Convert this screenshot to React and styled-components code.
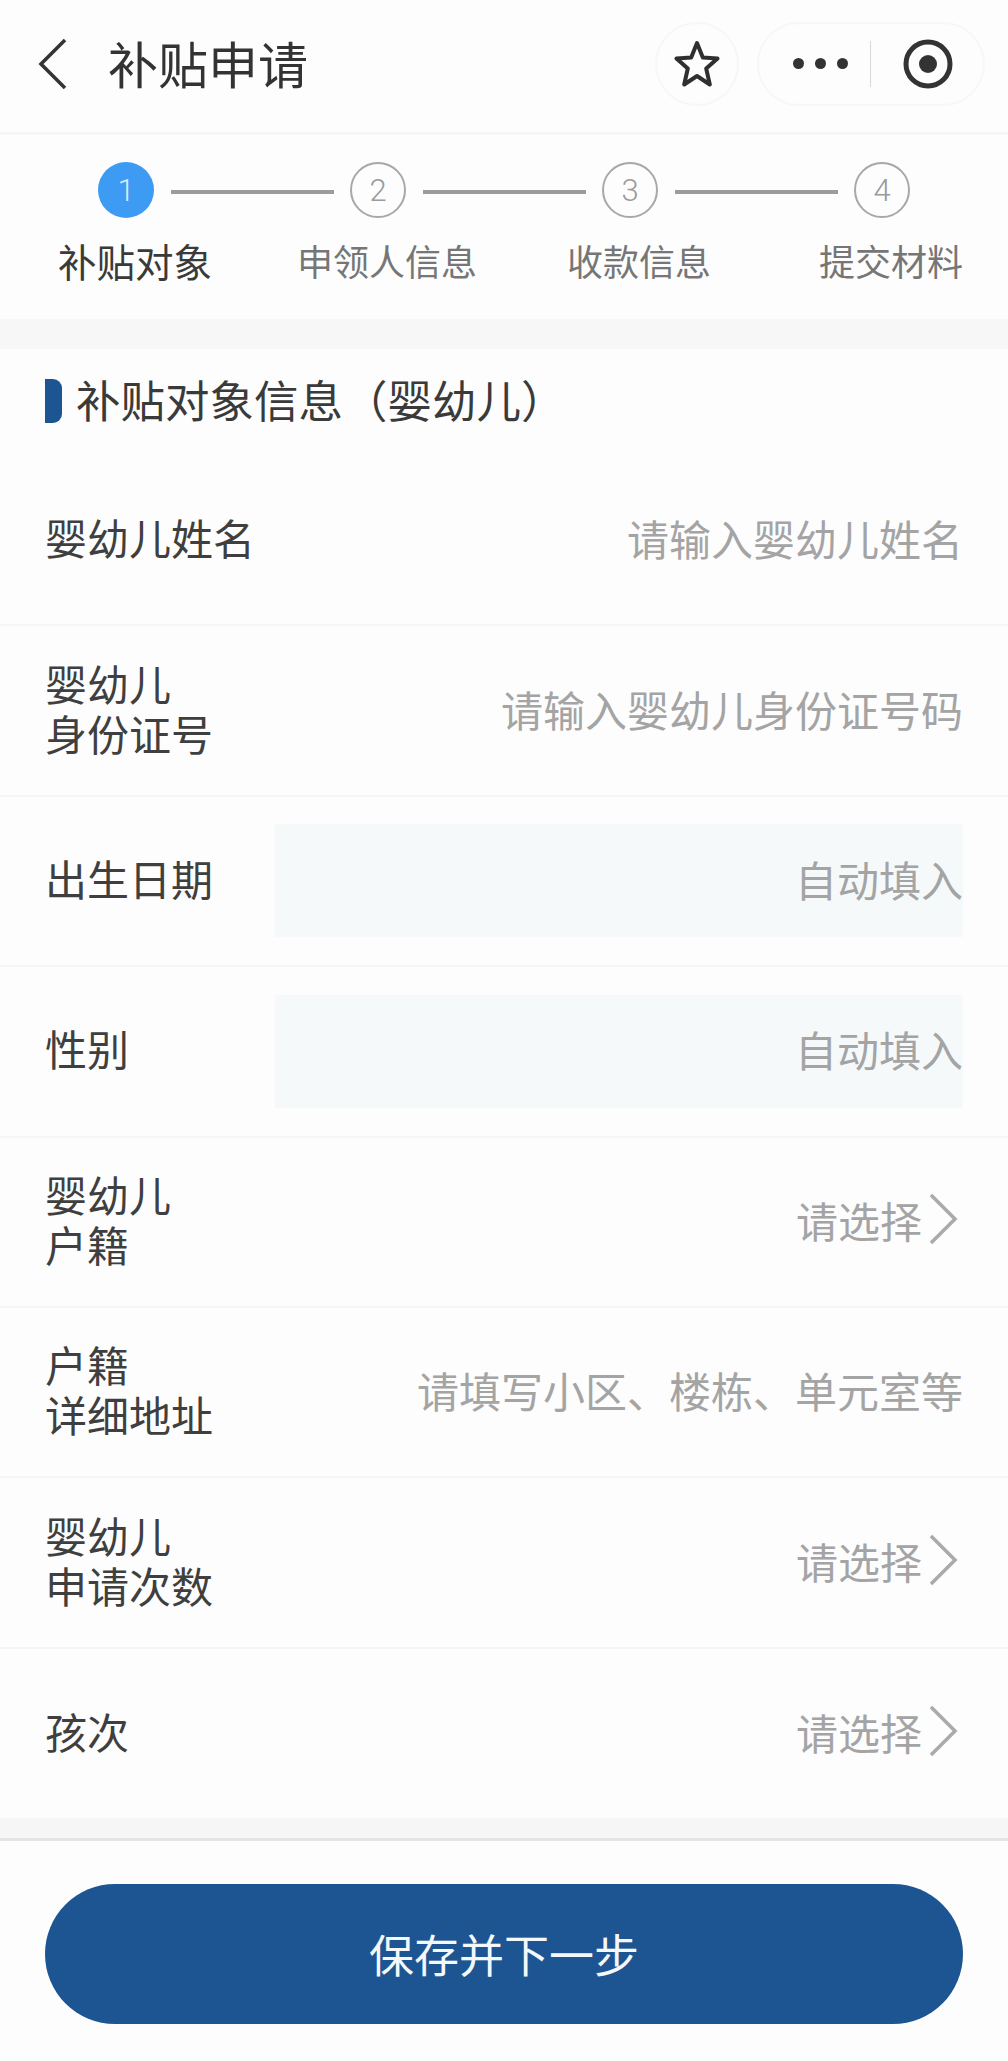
import React from 'react';
import styled, { createGlobalStyle } from 'styled-components';

const Global = createGlobalStyle`
  html, body { margin: 0; padding: 0; background: #fdfdfd; }
  body { font-family: "Noto Sans CJK SC", "Noto Sans", sans-serif; }
`;
const Page = styled.div`
  width: 1008px; height: 2061px; display: flex; flex-direction: column; overflow: hidden;
  background: #fdfdfd; color: #3c3c3c;
`;
const Nav = styled.header`
  height: 135px; box-sizing: border-box; display: flex; align-items: center;
  padding: 2px 23px 4px 36px; border-bottom: 3px solid #f6f6f6; flex: none;
`;
const BackBtn = styled.svg`width: 32px; height: 52px; flex: none; margin-top: -3px;`;
const NavTitle = styled.h1`
  margin: -6px 0 0 40px; flex: 1; font-size: 50px; font-weight: 400; line-height: 60px; color: #333;
`;
const StarCapsule = styled.div`
  width: 84px; height: 84px; border-radius: 50%; border: 2px solid #f7f7f7; box-sizing: border-box;
  display: flex; align-items: center; justify-content: center; margin-right: 18px; margin-top: -3px;
`;
const Capsule = styled.div`
  width: 228px; height: 84px; border-radius: 42px; border: 2px solid #f7f7f7; box-sizing: border-box;
  display: flex; align-items: center; padding-left: 34px; margin-top: -3px;
`;
const Dots = styled.div`display: flex; gap: 11px;`;
const Dot = styled.span`width: 11px; height: 11px; border-radius: 50%; background: #333;`;
const Divider = styled.span`width: 1px; height: 46px; background: #d8d8d8; margin: 0 32px 0 22px;`;
const Target = styled.svg`width: 50px; height: 50px;`;

const Steps = styled.section`
  height: 184px; box-sizing: border-box; padding-top: 27px; flex: none;
`;
const CircleRow = styled.div`display: flex; align-items: center; padding-left: 98px; height: 56px;`;
const Circle = styled.span`
  width: 56px; height: 56px; box-sizing: border-box; border-radius: 50%; flex: none;
  display: flex; align-items: center; justify-content: center;
  font-family: Roboto, sans-serif; font-weight: 300; font-size: 31px;
  background: ${p => (p.$active ? '#3d9bf3' : 'transparent')};
  color: ${p => (p.$active ? '#d8ecfd' : '#9a9a9a')};
  border: ${p => (p.$active ? 'none' : '2px solid #a8a8a8')};
`;
const Connector = styled.span`
  width: 163px; height: 4px; background: #9c9c9c; margin: 4px 16px 0 17px; flex: none;
`;
const LabelRow = styled.div`
  display: grid; grid-template-columns: repeat(4, 252px); padding-left: 9px; margin-top: 21px;
`;
const StepLabel = styled.span`
  text-align: center; line-height: 42px; white-space: nowrap;
  font-size: ${p => (p.$active ? '38.5px' : '36px')};
  color: ${p => (p.$active ? '#3a3a3a' : '#767676')};
`;
const Band = styled.div`height: 30px; background: #f7f7f7; flex: none;`;
const SectionHead = styled.h2`
  margin: 0; height: 107px; box-sizing: border-box; display: flex; align-items: flex-start;
  padding: 30px 0 0 45px; font-size: 44.5px; font-weight: 400; line-height: 48px; color: #3a3a3a; flex: none;
`;
const HeadBar = styled.span`
  width: 17px; height: 44px; background: #1c5592; border-radius: 0 9px 9px 0; margin-right: 14px; flex: none;
`;
const HeadText = styled.span`margin-top: -4px; white-space: nowrap;`;
const Form = styled.div`display: flex; flex-direction: column; flex: none;`;
const Row = styled.div`
  height: 170.4px; box-sizing: border-box; display: flex; align-items: center; justify-content: space-between;
  padding: 0 45px; border-bottom: ${p => (p.$last ? 'none' : '2px solid #f5f5f5')};
`;
const Label = styled.div`
  font-size: 42px; line-height: 50px; color: #3f3f3f; flex: none; width: 230px; margin-top: -6px;
`;
const LabelLine = styled.div`white-space: nowrap;`;
const Value = styled.div`
  flex: 1; min-width: 0; height: 113px; box-sizing: border-box; padding-bottom: 5px;
  display: flex; align-items: center; justify-content: flex-end;
  font-size: 42px; color: #a4a4a4; white-space: nowrap;
  background: ${p => (p.$readonly ? '#f6f9fa' : 'transparent')};
`;
const Chevron = styled.svg`width: 30px; height: 52px; margin: 0 5px 0 6px; flex: none;`;
const FormEnd = styled.div`height: 20px; background: #f6f6f6; flex: none; margin-top: -1px;`;
const Footer = styled.footer`
  flex: 1; border-top: 3px solid #e4e4e4; padding: 43px 45px 0; box-sizing: border-box;
`;
const SaveButton = styled.button`
  display: block; width: 918px; height: 140px; border: none; border-radius: 70px; background: #1c5592;
  color: #f4f8fb; font-family: inherit; font-size: 45px; font-weight: 400; padding: 0 0 2px;
`;

const rows = [
  { label: ['婴幼儿姓名'], value: '请输入婴幼儿姓名' },
  { label: ['婴幼儿', '身份证号'], value: '请输入婴幼儿身份证号码' },
  { label: ['出生日期'], value: '自动填入', readonly: true },
  { label: ['性别'], value: '自动填入', readonly: true },
  { label: ['婴幼儿', '户籍'], value: '请选择', arrow: true },
  { label: ['户籍', '详细地址'], value: '请填写小区、楼栋、单元室等' },
  { label: ['婴幼儿', '申请次数'], value: '请选择', arrow: true },
  { label: ['孩次'], value: '请选择', arrow: true },
];
const steps = ['补贴对象', '申领人信息', '收款信息', '提交材料'];

export default function App() {
  return (
    <Page>
      <Global />
      <Nav>
        <BackBtn viewBox="0 0 32 52">
          <path d="M29 2 L5 26 L29 50" fill="none" stroke="#333" strokeWidth="3.5" />
        </BackBtn>
        <NavTitle>补贴申请</NavTitle>
        <StarCapsule>
          <svg width="46" height="48" viewBox="0 0 46 48">
            <path d="M23 3 L28.8 17.5 L43.5 18.5 L32.2 28.5 L35.8 44.5 L23 36 L10.2 44.5 L13.8 28.5 L2.5 18.5 L17.2 17.5 Z"
              fill="none" stroke="#2f2f2f" strokeWidth="4" strokeLinejoin="round" />
          </svg>
        </StarCapsule>
        <Capsule>
          <Dots><Dot /><Dot /><Dot /></Dots>
          <Divider />
          <Target viewBox="0 0 50 50">
            <circle cx="25" cy="25" r="22" fill="none" stroke="#333" strokeWidth="5" />
            <circle cx="25" cy="25" r="9" fill="#333" />
          </Target>
        </Capsule>
      </Nav>
      <Steps>
        <CircleRow>
          {steps.map((s, i) => (
            <React.Fragment key={s}>
              <Circle $active={i === 0}>{i + 1}</Circle>
              {i < 3 && <Connector />}
            </React.Fragment>
          ))}
        </CircleRow>
        <LabelRow>
          {steps.map((s, i) => <StepLabel key={s} $active={i === 0}>{s}</StepLabel>)}
        </LabelRow>
      </Steps>
      <Band />
      <SectionHead><HeadBar /><HeadText>补贴对象信息（婴幼儿）</HeadText></SectionHead>
      <Form>
        {rows.map((r, i) => (
          <Row key={i} $last={i === rows.length - 1}>
            <Label>{r.label.map(l => <LabelLine key={l}>{l}</LabelLine>)}</Label>
            <Value $readonly={r.readonly}>
              {r.value}
              {r.arrow && (
                <Chevron viewBox="0 0 30 52">
                  <path d="M3 2 L27 26 L3 50" fill="none" stroke="#aaa" strokeWidth="3.5" />
                </Chevron>
              )}
            </Value>
          </Row>
        ))}
      </Form>
      <FormEnd />
      <Footer><SaveButton>保存并下一步</SaveButton></Footer>
    </Page>
  );
}
